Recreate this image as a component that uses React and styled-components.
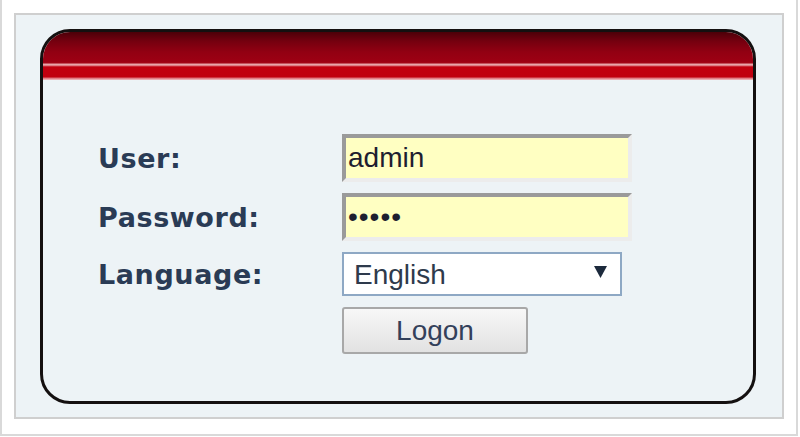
import React from 'react';
import styled, { createGlobalStyle } from 'styled-components';

const GlobalStyle = createGlobalStyle`
  html, body {
    margin: 0;
    padding: 0;
    background: #ffffff;
  }
  body {
    font-family: "Liberation Sans", Arial, sans-serif;
  }
`;

function App() {
    return (
        <>
            <GlobalStyle />
            <Page>
                <Frame>
                    <Panel>
                        <Header />
                        <Form>
                            <Label>User:</Label>
                            <TextInput type="text" defaultValue="admin" />

                            <Label>Password:</Label>
                            <TextInput type="password" defaultValue="admin" $secret />

                            <Label>Language:</Label>
                            <SelectWrap>
                                <Select defaultValue="en">
                                    <option value="en">English</option>
                                    <option value="zh">中文</option>
                                </Select>
                                <Arrow viewBox="0 0 13 12">
                                    <polygon points="0,0 13,0 6.5,12" fill="#1c2a3c" />
                                </Arrow>
                            </SelectWrap>

                            <LogonButton type="button">Logon</LogonButton>
                        </Form>
                    </Panel>
                </Frame>
            </Page>
        </>
    );
}

export default App;

const Page = styled.div`
    box-sizing: border-box;
    width: 798px;
    height: 436px;
    border: 2px solid #d9d9d9;
    border-top: none;
    padding: 13px 12px 0 12px;
    background: #ffffff;
    `;

const Frame = styled.div`
    box-sizing: border-box;
    display: flex;
    width: 770px;
    height: 406px;
    border: 2px solid #cfcfcf;
    background: #edf3f6;
    padding: 14px 26px 13px 24px;
    `;

const Panel = styled.div`
    flex: 1;
    display: flex;
    flex-direction: column;
    border: 3px solid #141010;
    border-radius: 30px;
    overflow: hidden;
    background: #edf3f6;
    `;

const Header = styled.div`
    height: 48px;
    flex-shrink: 0;
    background: linear-gradient(
        to bottom,
        #4c0008 0px,
        #74000f 9px,
        #920012 20px,
        #9e0013 30px,
        #a40818 31px,
        #e39aa0 32px,
        #eeb0b4 33px,
        #d24a55 34px,
        #c2000f 35px,
        #c0000f 45px,
        #dc6a72 46px,
        #efc5c8 48px
    );
    `;

const Form = styled.div`
    display: grid;
    grid-template-columns: 244px auto;
    justify-content: start;
    align-items: center;
    row-gap: 11px;
    padding: 54px 0 0 55px;
    `;

const Label = styled.label`
    font-family: "DejaVu Sans", Verdana, sans-serif;
    font-weight: 700;
    font-size: 27px;
    letter-spacing: 0.6px;
    color: #2a3b55;
    `;

const TextInput = styled.input`
    box-sizing: border-box;
    width: 290px;
    height: 48px;
    margin: 0;
    padding: 0 4px 0 2px;
    border-style: solid;
    border-width: 4px;
    border-color: #9a9a9a #ececec #ececec #9a9a9a;
    background: #ffffc2;
    font-family: "Liberation Sans", Arial, sans-serif;
    font-size: 28px;
    letter-spacing: ${(p) => (p.$secret ? '1px' : '0')};
    color: #1e1e30;
    outline: none;
    `;

const SelectWrap = styled.div`
    position: relative;
    width: 280px;
    height: 44px;
    `;

const Select = styled.select`
    appearance: none;
    -webkit-appearance: none;
    box-sizing: border-box;
    width: 100%;
    height: 100%;
    margin: 0;
    padding: 0 30px 0 10px;
    border: 2px solid #8ea8c4;
    border-radius: 0;
    background: #ffffff;
    font-family: "Liberation Sans", Arial, sans-serif;
    font-size: 28px;
    color: #2e3a4c;
    outline: none;
    `;

const Arrow = styled.svg`
    position: absolute;
    right: 15px;
    top: 14px;
    width: 13px;
    height: 12px;
    pointer-events: none;
    `;

const LogonButton = styled.button`
    grid-column: 2;
    box-sizing: border-box;
    width: 186px;
    height: 47px;
    margin: 0;
    padding: 0;
    border: 2px solid #a8a8a8;
    border-radius: 3px;
    background: linear-gradient(to bottom, #f7f7f7, #e2e2e2);
    font-family: "Liberation Sans", Arial, sans-serif;
    font-size: 28px;
    color: #33405a;
    cursor: pointer;
    `;
